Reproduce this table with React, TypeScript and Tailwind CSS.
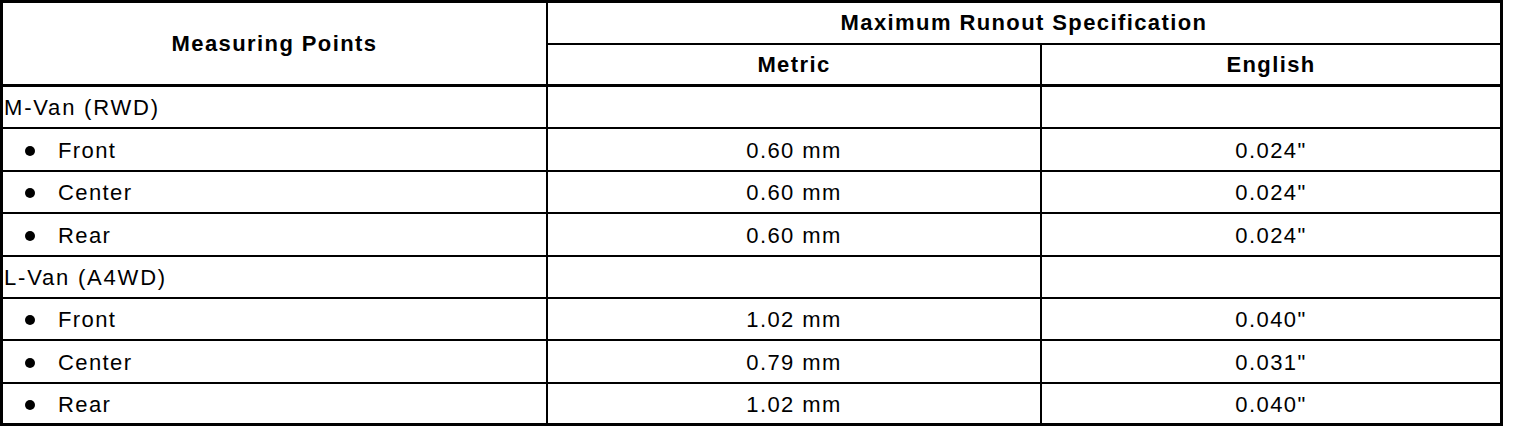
import React from "react";

type Row = { label: string; metric?: string; english?: string; bullet?: boolean };

const rows: Row[] = [
  { label: "M-Van (RWD)" },
  { label: "Front", metric: "0.60 mm", english: "0.024\"", bullet: true },
  { label: "Center", metric: "0.60 mm", english: "0.024\"", bullet: true },
  { label: "Rear", metric: "0.60 mm", english: "0.024\"", bullet: true },
  { label: "L-Van (A4WD)" },
  { label: "Front", metric: "1.02 mm", english: "0.040\"", bullet: true },
  { label: "Center", metric: "0.79 mm", english: "0.031\"", bullet: true },
  { label: "Rear", metric: "1.02 mm", english: "0.040\"", bullet: true },
];

const App = () => {
  return (
    <div className="bg-white w-[1520px] h-[428px] font-['Liberation_Sans',Arial,sans-serif] text-[22px] tracking-[1.4px] text-black leading-none">
      <div className="w-[1503px] border-[3px] border-black bg-black grid grid-cols-[543px_492px_458px] grid-rows-[40px_40px_40px_41px_40px_41px_40px_40px_41px_39px] gap-[2px]">
        <div className="row-span-2 bg-white mb-[1px] flex items-center justify-center font-bold">
          Measuring Points
        </div>
        <div className="col-span-2 bg-white flex items-center justify-center font-bold">
          Maximum Runout Specification
        </div>
        <div className="bg-white mb-[1px] flex items-center justify-center font-bold">Metric</div>
        <div className="bg-white mb-[1px] flex items-center justify-center font-bold">English</div>

        {rows.map((r, i) => (
          <React.Fragment key={i}>
            <div className={`bg-white flex items-center pt-[2px] ${r.bullet ? "pl-[22px]" : "pl-[1px] tracking-[1.8px]"}`}>
              {r.bullet && <span className="w-[10px] h-[10px] rounded-full bg-black mr-[23px] shrink-0" />}
              {r.label}
            </div>
            <div className="bg-white flex items-center justify-center pt-[2px]">{r.metric}</div>
            <div className="bg-white flex items-center justify-center pt-[2px]">{r.english}</div>
          </React.Fragment>
        ))}
      </div>
    </div>
  );
};

export default App;
